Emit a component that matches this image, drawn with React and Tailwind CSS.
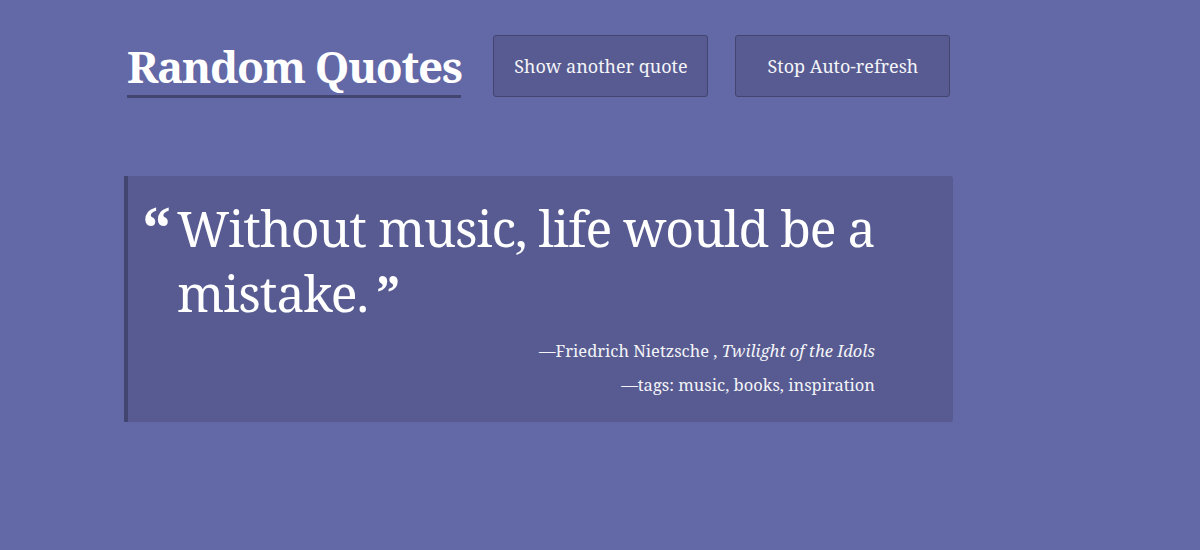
export default function App() {
  return (
    <div
      className="min-h-[550px] w-full bg-[#6368a6] text-white"
      style={{ fontFamily: '"Noto Serif", "DejaVu Serif", serif' }}
    >
      <div className="pl-[127px] pt-[35px]">
        {/* Header */}
        <div className="flex items-start">
          <h1 className="mt-[3px] border-b-[3px] border-[#41456f] pb-[1px] text-[44px] font-bold leading-[56px] tracking-[-1.4px]">
            Random Quotes
          </h1>
          <button className="ml-[32px] h-[62px] w-[215px] rounded-[3px] border border-[#41456f] bg-[#575b91] text-[18px] text-[#f4f4f8]">
            Show another quote
          </button>
          <button className="ml-[27px] h-[62px] w-[215px] rounded-[3px] border border-[#41456f] bg-[#575b91] text-[18px] text-[#f4f4f8]">
            Stop Auto-refresh
          </button>
        </div>

        {/* Quote card */}
        <div className="mt-[78px] ml-[-3px] w-[829px] rounded-r-[3px] border-l-4 border-[#41456f] bg-[#575b91] pl-[14px] pr-[78px] pt-[20px] pb-[20px]">
          <div className="flex">
            <span className="w-[35px] shrink-0 pt-[2px] text-[60px] font-bold leading-[60px]">“</span>
            <blockquote className="mr-[-20px] text-[50px] leading-[65px] tracking-[-1px]">
              Without music, life would be a
              <br />
              mistake.<span className="ml-[8px] font-bold">”</span>
            </blockquote>
          </div>
          <div className="mt-[8px] text-right text-[16.5px] leading-[34px] text-[#f4f4f8]">
            <p>
              —Friedrich Nietzsche , <em>Twilight of the Idols</em>
            </p>
            <p>—tags: music, books, inspiration</p>
          </div>
        </div>
      </div>
    </div>
  );
}
